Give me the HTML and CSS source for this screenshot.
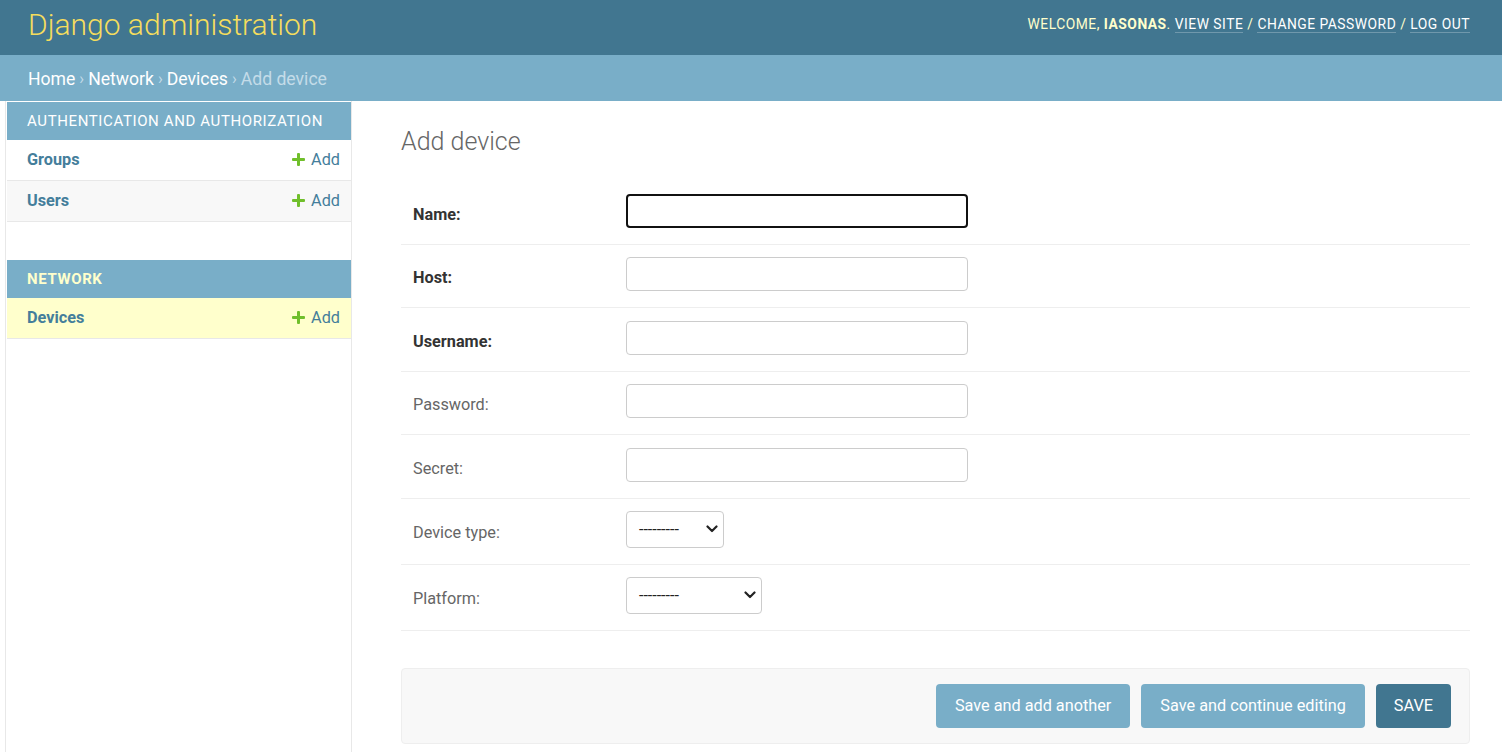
FILE: index.html
```html
<!DOCTYPE html>
<html lang="en">
<head>
<meta charset="utf-8">
<title>Add device | Django site admin</title>
<link rel="stylesheet" href="styles.css">
</head>
<body>
<header class="header">
  <div class="branding">Django administration</div>
  <div class="user-tools">Welcome, <strong>iasonas</strong>. <a href="#">View site</a> / <a href="#">Change password</a> / <a href="#">Log out</a></div>
</header>
<nav class="breadcrumbs">
  <a href="#">Home</a><span class="sep">›</span><a href="#">Network</a><span class="sep">›</span><a href="#">Devices</a><span class="sep">›</span><span class="current">Add device</span>
</nav>
<div class="main">
  <div class="toggle"></div>
  <aside class="sidebar">
    <div class="module">
      <div class="caption">Authentication and Authorization</div>
      <div class="model-row"><a href="#" class="model">Groups</a><a href="#" class="addlink"><span class="plus"></span>Add</a></div>
      <div class="model-row alt"><a href="#" class="model">Users</a><a href="#" class="addlink"><span class="plus"></span>Add</a></div>
    </div>
    <div class="module">
      <div class="caption current">Network</div>
      <div class="model-row current"><a href="#" class="model">Devices</a><a href="#" class="addlink"><span class="plus"></span>Add</a></div>
    </div>
  </aside>
  <div class="content">
    <h1 class="title">Add device</h1>
    <form class="aligned">
      <div class="form-row"><label class="required">Name:</label><input type="text" class="vtext focused"></div>
      <div class="form-row"><label class="required">Host:</label><input type="text" class="vtext"></div>
      <div class="form-row"><label class="required">Username:</label><input type="text" class="vtext"></div>
      <div class="form-row"><label>Password:</label><input type="text" class="vtext"></div>
      <div class="form-row"><label>Secret:</label><input type="text" class="vtext"></div>
      <div class="form-row sel"><label>Device type:</label><div class="select sel-type"><span>---------</span><svg class="chev" width="12" height="8" viewBox="0 0 12 8"><path d="M1.5 1.5 L6 6 L10.5 1.5" fill="none" stroke="#222" stroke-width="2.2" stroke-linecap="round" stroke-linejoin="round"/></svg></div></div>
      <div class="form-row sel"><label>Platform:</label><div class="select sel-platform"><span>---------</span><svg class="chev" width="12" height="8" viewBox="0 0 12 8"><path d="M1.5 1.5 L6 6 L10.5 1.5" fill="none" stroke="#222" stroke-width="2.2" stroke-linecap="round" stroke-linejoin="round"/></svg></div></div>
      <div class="submit-row">
        <button type="button" class="btn">Save and add another</button>
        <button type="button" class="btn">Save and continue editing</button>
        <button type="button" class="btn default">SAVE</button>
      </div>
    </form>
  </div>
</div>
</body>
</html>
```

FILE: styles.css
```css
* { box-sizing: border-box; }
html, body { margin: 0; padding: 0; }
body {
  font-family: Roboto, "Liberation Sans", sans-serif;
  color: #333;
  background: #fff;
  font-size: 16.25px;
}
a { text-decoration: none; }

.header {
  height: 55px;
  background: #417690;
  display: flex;
  align-items: center;
  justify-content: space-between;
  padding: 0 32px 0 28px;
}
.branding {
  color: #f5dd5d;
  font-size: 30px;
  font-weight: 300;
  margin-top: -6px;
}
.user-tools {
  color: #ffc;
  font-size: 13.85px;
  letter-spacing: 0.5px;
  text-transform: uppercase;
  margin-top: -7px;
}
.user-tools strong { font-weight: 700; }
.user-tools a {
  color: #fff;
  border-bottom: 1px solid rgba(255,255,255,0.25);
}

.breadcrumbs {
  height: 46px;
  background: #79aec8;
  color: #c4dce8;
  display: flex;
  align-items: center;
  padding: 1px 28px 0;
  font-size: 17.6px;
}
.breadcrumbs a { color: #fff; }
.breadcrumbs .sep { margin: 0 4px; font-size: 16px; }

.main {
  display: flex;
  min-height: calc(100vh - 101px);
}
.toggle {
  flex: 0 0 6px;
  border-right: 1px solid #e8e8e8;
}
.sidebar {
  flex: 0 0 346px;
  border-right: 1px solid #e8e8e8;
  padding: 1px 0 0 1px;
}
.module { margin-bottom: 38px; }
.caption {
  background: #79aec8;
  color: #fff;
  height: 38px;
  display: flex;
  align-items: center;
  padding-left: 20px;
  font-size: 15px;
  letter-spacing: 0.62px;
  text-transform: uppercase;
}
.caption.current { color: #ffc; font-weight: 700; }
.model-row {
  height: 41px;
  border-bottom: 1px solid #e8e8e8;
  display: flex;
  align-items: center;
  justify-content: space-between;
  padding: 0 11px 0 20px;
  background: #fff;
}
.model-row.alt { background: #f8f8f8; }
.model-row.current { background: #ffc; }
.model { color: #447e9b; font-weight: 700; font-size: 16.25px; margin-top: -2px; }
.addlink {
  color: #447e9b;
  font-size: 16.25px;
  display: flex;
  align-items: center;
  margin-top: -2px;
}
.plus {
  width: 13px;
  height: 13px;
  margin-right: 6px;
  position: relative;
  display: inline-block;
}
.plus::before, .plus::after {
  content: "";
  position: absolute;
  background: #70bf2b;
  border-radius: 1px;
}
.plus::before { left: 5px; top: 0; width: 3.4px; height: 13px; }
.plus::after { top: 5px; left: 0; height: 3.4px; width: 13px; }

.content {
  flex: 1;
  padding: 26px 32px 25px 49px;
}
.title {
  margin: 0 0 24px;
  font-size: 25px;
  font-weight: 300;
  color: #666;
  line-height: 30px;
}
.form-row {
  display: flex;
  align-items: center;
  padding: 12.5px 12px 16px;
  border-bottom: 1px solid #eee;
}
.form-row label {
  flex: 0 0 213px;
  color: #666;
  font-size: 16.25px;
  padding-top: 7px;
}
.form-row label.required { color: #333; font-weight: 700; }
.vtext {
  width: 342px;
  height: 34px;
  border: 1px solid #ccc;
  border-radius: 4px;
  padding: 5px 8px;
  font: inherit;
  background: #fff;
}
.vtext.focused {
  border: 2px solid #111;
}
.select {
  height: 36.5px;
  border: 1px solid #ccc;
  border-radius: 4px;
  display: flex;
  align-items: center;
  justify-content: space-between;
  padding: 0 5px 0 12px;
  font-size: 16px;
  color: #222;
  background: #fff;
}
.select span { letter-spacing: 0; margin-top: 1px; }
.sel-type { width: 98px; }
.sel-platform { width: 136px; }
.chev { display: block; }

.submit-row {
  margin-top: 37px;
  background: #f8f8f8;
  border: 1px solid #eee;
  border-radius: 4px;
  padding: 15px 18px;
  display: flex;
  justify-content: flex-end;
  gap: 11px;
}
.btn {
  height: 44px;
  border: none;
  border-radius: 4px;
  background: #79aec8;
  color: #fff;
  font-family: Roboto, "Liberation Sans", sans-serif;
  font-size: 16.25px;
  padding: 0 19px;
}
.btn.default { background: #417690; padding: 0 18px; }
```
